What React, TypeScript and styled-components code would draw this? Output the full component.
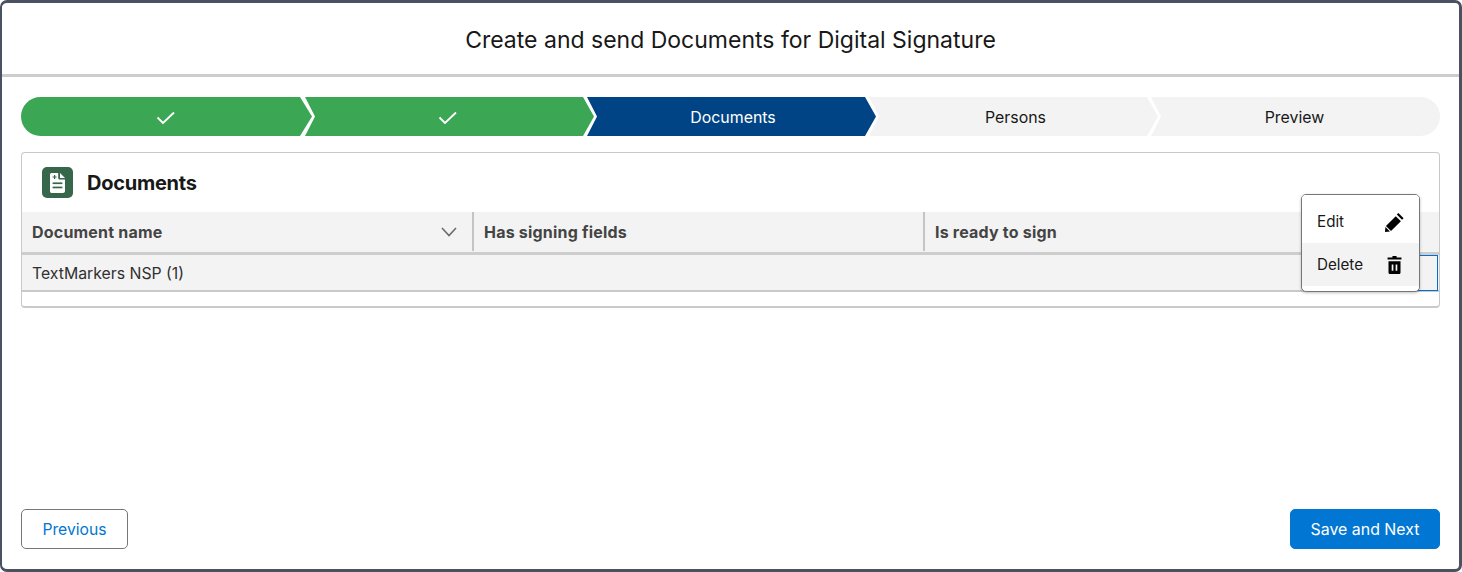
import styled, { createGlobalStyle } from "styled-components";

const GlobalStyle = createGlobalStyle`
  html, body {
    margin: 0;
    padding: 0;
    background: #fff;
  }
  body {
    font-family: Inter, "Liberation Sans", sans-serif;
    color: #181818;
  }
  * {
    box-sizing: border-box;
  }
`;

const Frame = styled.div`
  width: 1462px;
  height: 572px;
  display: flex;
  flex-direction: column;
  background: #fff;
  border-style: solid;
  border-color: #4a5161;
  border-width: 3px 3px 3px 2px;
  border-radius: 7px;
`;

const Header = styled.div`
  height: 74px;
  flex: none;
  display: flex;
  align-items: center;
  justify-content: center;
  padding-top: 2px;
  border-bottom: 3px solid #cdcdcd;
  font-size: 23px;
  color: #181818;
`;

const Body = styled.div`
  flex: 1;
  display: flex;
  flex-direction: column;
  padding: 20px 19px 20px 19px;
`;

const Path = styled.div`
  display: flex;
  height: 39px;
`;

const Step = styled.div<{ $w: number; $bg: string; $fg: string; $pos: string; $nudge?: number }>`
  flex: none;
  width: ${(p) => p.$w}px;
  margin-left: ${(p) => (p.$pos === "first" ? "0" : "-7px")};
  padding-top: 2px;
  padding-left: ${(p) => Math.max(p.$nudge ?? 0, 0)}px;
  padding-right: ${(p) => Math.max(-(p.$nudge ?? 0), 0)}px;
  display: flex;
  align-items: center;
  justify-content: center;
  background: ${(p) => p.$bg};
  color: ${(p) => p.$fg};
  font-size: 15.9px;
  border-radius: ${(p) =>
    p.$pos === "first" ? "20px 0 0 20px" : p.$pos === "last" ? "0 20px 20px 0" : "0"};
  clip-path: ${(p) =>
    p.$pos === "first"
      ? "polygon(0 0, calc(100% - 12px) 0, 100% 50%, calc(100% - 12px) 100%, 0 100%)"
      : p.$pos === "last"
        ? "polygon(0 0, 100% 0, 100% 100%, 0 100%, 10px 50%)"
        : "polygon(0 0, calc(100% - 11px) 0, 100% 50%, calc(100% - 11px) 100%, 0 100%, 10px 50%)"};
`;

const Card = styled.div`
  position: relative;
  margin-top: 16px;
  height: 156px;
  border: 1px solid #c9c9c9;
  border-bottom-width: 2px;
  border-radius: 4px;
`;

const CardHead = styled.div`
  height: 59px;
  display: flex;
  align-items: center;
  gap: 14px;
  padding: 0 0 0 20px;
  font-size: 20px;
  font-weight: 700;
  letter-spacing: -0.25px;
  color: #181818;
`;

const IconTile = styled.div`
  width: 31px;
  height: 31px;
  border-radius: 5px;
  background: #37674a;
  display: flex;
  align-items: center;
  justify-content: center;
`;

const HeadRow = styled.div`
  height: 43px;
  display: flex;
  background: #f3f3f3;
  border-bottom: 3px solid #cdcdcd;
`;

const HeadCell = styled.div<{ $w: number }>`
  width: ${(p) => p.$w}px;
  flex: none;
  display: flex;
  align-items: center;
  justify-content: space-between;
  padding: 0 15px 0 10px;
  font-size: 16px;
  font-weight: 700;
  color: #444;
  letter-spacing: 0.2px;
  border-right: 2px solid #c4c4c4;
  margin-bottom: 1px;
  &:last-child {
    border-right: none;
    flex: 1;
  }
`;

const DataRow = styled.div`
  height: 37px;
  display: flex;
  align-items: center;
  justify-content: space-between;
  background: #f3f3f3;
  border-bottom: 2px solid #c9c9c9;
  padding-left: 10px;
  font-size: 15.8px;
  color: #303030;
`;

const CellText = styled.span`
  padding-top: 2px;
`;

const FocusCell = styled.div`
  width: 80px;
  height: 36px;
  align-self: flex-start;
  margin-right: 1px;
  border: 1px solid #0070d2;
  border-left: none;
`;

const Menu = styled.div`
  position: absolute;
  left: 1279px;
  top: 41px;
  width: 119px;
  height: 98px;
  padding-bottom: 5px;
  background: #fff;
  border: 1px solid #777;
  border-radius: 5px;
  box-shadow: 0 1px 3px rgba(0, 0, 0, 0.25);
  overflow: hidden;
`;

const MenuItem = styled.div<{ $active?: boolean }>`
  height: ${(p) => (p.$active ? 43 : 48)}px;
  padding: ${(p) => (p.$active ? "0 17px 0 15px" : "5px 14px 0 15px")};
  display: flex;
  align-items: center;
  justify-content: space-between;
  font-size: 15.2px;
  color: #181818;
  background: ${(p) => (p.$active ? "#f3f3f3" : "#fff")};
`;

const Footer = styled.div`
  margin-top: auto;
  display: flex;
  justify-content: space-between;
`;

const Button = styled.button<{ $primary?: boolean }>`
  height: 40px;
  width: ${(p) => (p.$primary ? 150 : 107)}px;
  padding: 0;
  border-radius: 5px;
  font-family: inherit;
  font-size: ${(p) => (p.$primary ? 15.9 : 15.7)}px;
  color: ${(p) => (p.$primary ? "#fff" : "#0176d3")};
  background: ${(p) => (p.$primary ? "#0176d3" : "#fff")};
  border: 1px solid ${(p) => (p.$primary ? "#0176d3" : "#777")};
`;

const Check = () => (
  <svg width="20" height="14" viewBox="0 0 20 14" fill="none">
    <path d="M1.5 6.5 L7 12 L18 1.5" stroke="#fff" strokeWidth="1.8" />
  </svg>
);

const Chevron = () => (
  <svg width="16" height="10" viewBox="0 0 16 10" fill="none">
    <path d="M1 1 L8 8.5 L15 1" stroke="#6b6b6b" strokeWidth="1.6" />
  </svg>
);

const DocIcon = () => (
  <svg width="15" height="20" viewBox="0 0 15 20">
    <path
      fill="#fff"
      d="M1.5 0 H8.2 V5 C8.2 6 9 6.6 10 6.6 H15 V18 C15 19 14.2 20 13 20 H1.5 C.6 20 0 19.2 0 18 V1.8 C0 .8.6 0 1.5 0 Z"
    />
    <path fill="#fff" d="M10 0 L15 5 H10 Z" />
    <path fill="#37674a" d="M2.6 3.4 H4 V2 H5.2 V3.4 H6.6 V4.6 H5.2 V6 H4 V4.6 H2.6 Z" />
    <rect x="2.6" y="9.4" width="9.8" height="1.7" fill="#37674a" />
    <rect x="2.6" y="13.6" width="9.8" height="1.7" fill="#37674a" />
  </svg>
);

const PencilIcon = () => (
  <svg width="20" height="20" viewBox="0 0 20 20">
    <path d="M13.2 1.6 L18.4 6.8 L16.8 8.4 L11.6 3.2 Z" fill="#000" transform="translate(.2 -.6)" />
    <path d="M10.8 4.2 L15.9 9.3 L6 19 L.9 14 Z" fill="#000" />
    <path d="M.4 15 L5 19.6 L0 20 Z" fill="#000" />
  </svg>
);

const TrashIcon = () => (
  <svg width="15" height="18" viewBox="0 0 16 19">
    <path d="M5.8 0 H10.2 V1.6 H15.4 V3.6 H.6 V1.6 H5.8 Z" fill="#000" />
    <path
      fillRule="evenodd"
      d="M1.6 5.4 H14.4 V17.4 C14.4 18.4 13.8 19 12.8 19 H3.2 C2.2 19 1.6 18.4 1.6 17.4 Z M5 9 V15.5 H6.8 V9 Z M9.2 9 V15.5 H11 V9 Z"
      fill="#000"
    />
  </svg>
);

const App = () => {
  return (
    <>
      <GlobalStyle />
      <Frame>
        <Header>Create and send Documents for Digital Signature</Header>
        <Body>
          <Path>
            <Step $w={291} $bg="#3ba755" $fg="#fff" $pos="first" $nudge={-2}>
              <Check />
            </Step>
            <Step $w={289} $bg="#3ba755" $fg="#fff" $pos="mid" $nudge={-3}>
              <Check />
            </Step>
            <Step $w={289} $bg="#014486" $fg="#fff" $pos="mid" $nudge={3}>
              Documents
            </Step>
            <Step $w={289} $bg="#f3f3f3" $fg="#181818" $pos="mid" $nudge={4}>
              Persons
            </Step>
            <Step $w={289} $bg="#f3f3f3" $fg="#181818" $pos="last" $nudge={-2}>
              Preview
            </Step>
          </Path>
          <Card>
            <CardHead>
              <IconTile>
                <DocIcon />
              </IconTile>
              Documents
            </CardHead>
            <HeadRow>
              <HeadCell $w={452}>
                Document name
                <Chevron />
              </HeadCell>
              <HeadCell $w={451}>Has signing fields</HeadCell>
              <HeadCell $w={500}>Is ready to sign</HeadCell>
            </HeadRow>
            <DataRow>
              <CellText>TextMarkers NSP (1)</CellText>
              <FocusCell />
            </DataRow>
            <Menu>
              <MenuItem>
                Edit
                <PencilIcon />
              </MenuItem>
              <MenuItem $active>
                Delete
                <TrashIcon />
              </MenuItem>
            </Menu>
          </Card>
          <Footer>
            <Button>Previous</Button>
            <Button $primary>Save and Next</Button>
          </Footer>
        </Body>
      </Frame>
    </>
  );
};

export default App;
